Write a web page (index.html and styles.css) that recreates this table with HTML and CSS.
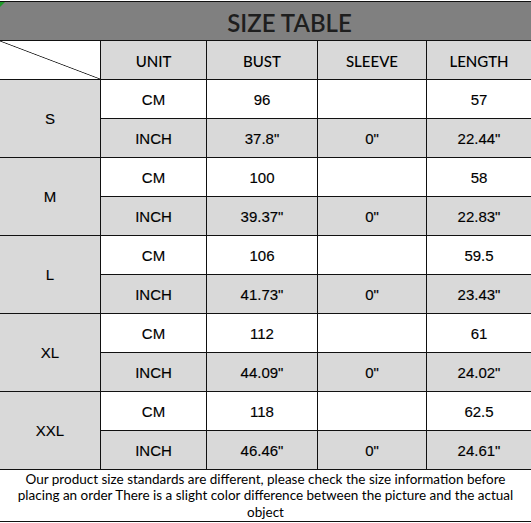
FILE: index.html
```html
<!DOCTYPE html>
<html>
<head>
<meta charset="utf-8">
<link rel="stylesheet" href="styles.css">
</head>
<body>
<div class="sheet">
  <span class="marker"></span>
  <div class="grid">
    <div class="cell title">SIZE TABLE</div>

    <div class="cell corner"></div>
    <div class="cell head">UNIT</div>
    <div class="cell head">BUST</div>
    <div class="cell head">SLEEVE</div>
    <div class="cell head last">LENGTH</div>

    <div class="cell size">S</div>
    <div class="cell data w">CM</div>
    <div class="cell data w">96</div>
    <div class="cell data w"></div>
    <div class="cell data w last">57</div>
    <div class="cell data g">INCH</div>
    <div class="cell data g">37.8"</div>
    <div class="cell data g">0"</div>
    <div class="cell data g last">22.44"</div>

    <div class="cell size">M</div>
    <div class="cell data w">CM</div>
    <div class="cell data w">100</div>
    <div class="cell data w"></div>
    <div class="cell data w last">58</div>
    <div class="cell data g">INCH</div>
    <div class="cell data g">39.37"</div>
    <div class="cell data g">0"</div>
    <div class="cell data g last">22.83"</div>

    <div class="cell size">L</div>
    <div class="cell data w">CM</div>
    <div class="cell data w">106</div>
    <div class="cell data w"></div>
    <div class="cell data w last">59.5</div>
    <div class="cell data g">INCH</div>
    <div class="cell data g">41.73"</div>
    <div class="cell data g">0"</div>
    <div class="cell data g last">23.43"</div>

    <div class="cell size">XL</div>
    <div class="cell data w">CM</div>
    <div class="cell data w">112</div>
    <div class="cell data w"></div>
    <div class="cell data w last">61</div>
    <div class="cell data g">INCH</div>
    <div class="cell data g">44.09"</div>
    <div class="cell data g">0"</div>
    <div class="cell data g last">24.02"</div>

    <div class="cell size">XXL</div>
    <div class="cell data w">CM</div>
    <div class="cell data w">118</div>
    <div class="cell data w"></div>
    <div class="cell data w last">62.5</div>
    <div class="cell data g">INCH</div>
    <div class="cell data g">46.46"</div>
    <div class="cell data g">0"</div>
    <div class="cell data g last">24.61"</div>

    <div class="cell note">Our product size standards are different, please check the size information before placing an order There is a slight color difference between the picture and the actual object</div>
  </div>
</div>
</body>
</html>
```

FILE: styles.css
```css
html, body {
  margin: 0;
  padding: 0;
  background: #ffffff;
}

.sheet {
  position: relative;
  width: 531px;
  padding-top: 1px;
}

.marker {
  position: absolute;
  left: 0;
  top: 2px;
  width: 0;
  height: 0;
  border-top: 5px solid #1f9a2a;
  border-right: 5px solid transparent;
}

.grid {
  display: grid;
  grid-template-columns: 101px 106px 111px 109px 104px;
  grid-template-rows: repeat(12, 39px) 52px;
  border-top: 1px solid #111;
}

.cell {
  box-sizing: border-box;
  border-right: 1px solid #111;
  border-bottom: 1px solid #111;
  display: flex;
  align-items: center;
  justify-content: center;
  color: #111;
}

.last {
  border-right: none;
}

.title {
  grid-column: 1 / span 5;
  border-right: none;
  background: #808080;
  font-family: Lato, "Liberation Sans", sans-serif;
  font-size: 24px;
  font-weight: 600;
  color: #1e1e1e;
  padding-top: 2px;
  padding-left: 48px;
}

.corner {
  background: linear-gradient(to top right, transparent calc(50% - 0.8px), #222 50%, transparent calc(50% + 0.8px));
}

.head {
  background: #d9d9d9;
  font-family: Lato, "Liberation Sans", sans-serif;
  font-size: 15px;
  font-weight: 500;
  color: #000;
  padding-top: 1px;
}

.size {
  grid-row: span 2;
  background: #d9d9d9;
  font-family: "Liberation Sans", Arial, sans-serif;
  font-size: 15px;
  color: #000;
  -webkit-text-stroke: 0.15px #000;
}

.data {
  font-family: "Liberation Sans", Arial, sans-serif;
  font-size: 15px;
  color: #000;
  -webkit-text-stroke: 0.15px #000;
  padding-top: 1px;
}

.w {
  background: #ffffff;
}

.g {
  background: #d9d9d9;
}

.note {
  grid-column: 1 / span 5;
  border-right: none;
  text-align: center;
  font-family: Lato, "Liberation Sans", sans-serif;
  font-size: 13.5px;
  line-height: 16.5px;
  color: #000;
  padding: 0 4px;
}
```
